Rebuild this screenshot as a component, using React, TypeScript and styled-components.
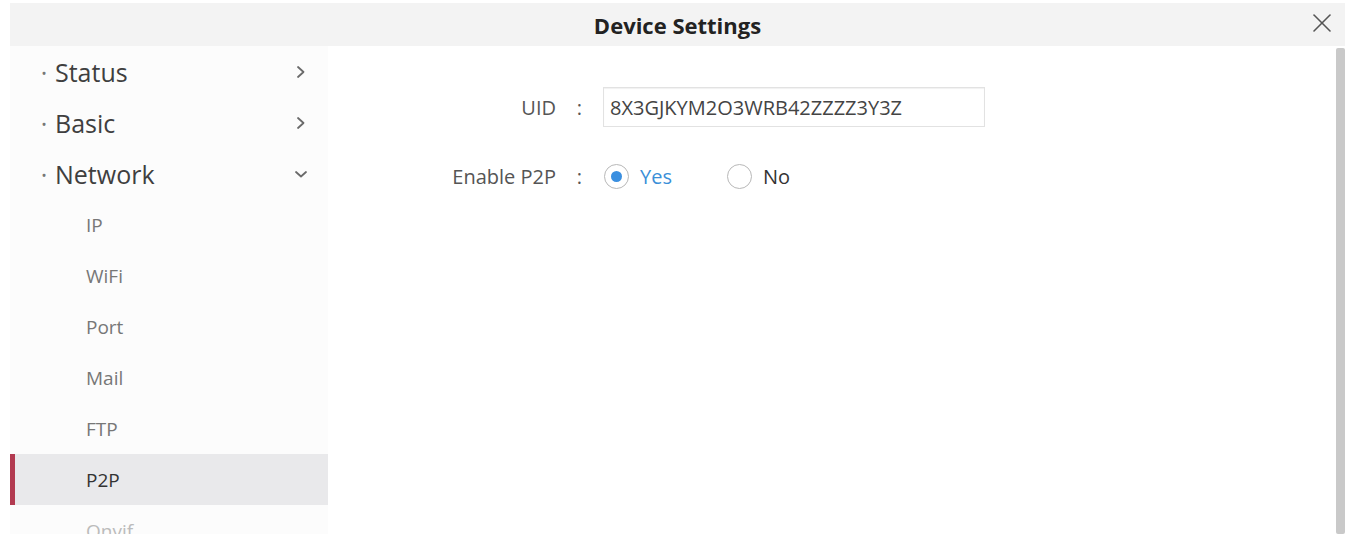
import React from 'react'
import styled, { createGlobalStyle } from 'styled-components'

const GlobalStyle = createGlobalStyle`
  html, body {
    margin: 0;
    padding: 0;
    background: #ffffff;
    overflow: hidden;
  }
  body {
    font-family: "Open Sans", "Noto Sans", "Liberation Sans", sans-serif;
  }
`;

const Dialog = styled.div`
  height: 534px;
  padding: 3px 3px 0 10px;
  box-sizing: border-box;
  display: flex;
  flex-direction: column;
  overflow: hidden;
`;

const Header = styled.div`
  height: 43px;
  flex-shrink: 0;
  background: #f3f3f3;
  display: flex;
  align-items: center;
  justify-content: center;
  position: relative;
`;

const Title = styled.div`
  font-weight: 700;
  font-size: 22px;
  color: #222;
`;

const CloseButton = styled.div`
  position: absolute;
  right: 12px;
  top: 9px;
  width: 22px;
  height: 22px;
  display: flex;
  align-items: center;
  justify-content: center;
`;

const Body = styled.div`
  flex: 1;
  display: flex;
  flex-direction: row;
  min-height: 0;
`;

const Sidebar = styled.div`
  width: 318px;
  flex-shrink: 0;
  background: #fcfcfc;
  display: flex;
  flex-direction: column;
`;

const MenuItem = styled.div`
  height: 51px;
  flex-shrink: 0;
  display: flex;
  align-items: center;
  justify-content: space-between;
  padding: 0 19px 0 27px;
  font-size: 25px;
  color: #3f3f3f;
`;

const Bullet = styled.span`
  display: inline-block;
  width: 14px;
  text-align: center;
  color: #777;
  margin-right: 4px;
`;

const SubItem = styled.div<{ active?: boolean; faded?: boolean }>`
  height: 51px;
  flex-shrink: 0;
  display: flex;
  align-items: center;
  padding-left: 71px;
  font-size: 19px;
  color: ${props => props.active ? '#333' : props.faded ? '#bbb' : '#777'};
  background: ${props => props.active ? '#e9e9eb' : 'transparent'};
  border-left: 5px solid ${props => props.active ? '#b23a50' : 'transparent'};
  box-sizing: border-box;
`;

const Content = styled.div`
  flex: 1;
  display: flex;
  flex-direction: row;
`;

const Form = styled.div`
  flex: 1;
  padding-top: 41px;
  display: flex;
  flex-direction: column;
  gap: 29px;
`;

const Row = styled.div`
  height: 40px;
  display: grid;
  grid-template-columns: 228px 47px auto;
  align-items: center;
`;

const Label = styled.div`
  text-align: right;
  font-size: 20px;
  color: #555;
`;

const Colon = styled.div`
  text-align: center;
  font-size: 20px;
  color: #555;
`;

const TextBox = styled.div`
  width: 382px;
  height: 40px;
  box-sizing: border-box;
  border: 1px solid #e2e2e2;
  box-shadow: inset 0 1px 1px rgba(0, 0, 0, 0.06);
  padding-left: 6px;
  display: flex;
  align-items: center;
  font-size: 20px;
  color: #444;
`;

const RadioGroup = styled.div`
  display: flex;
  align-items: center;
`;

const RadioOption = styled.label<{ checked?: boolean }>`
  display: flex;
  align-items: center;
  font-size: 20px;
  color: ${props => props.checked ? '#3a8fd8' : '#333'};
  margin-right: 54px;
`;

const RadioCircle = styled.span<{ checked?: boolean }>`
  width: 25px;
  height: 25px;
  box-sizing: border-box;
  border-radius: 50%;
  border: 1.5px solid #b8b8b8;
  margin: 0 11px 0 1px;
  display: flex;
  align-items: center;
  justify-content: center;
  &::after {
    content: '';
    display: ${props => props.checked ? 'block' : 'none'};
    width: 11px;
    height: 11px;
    border-radius: 50%;
    background: #3a8fe0;
  }
`;

const Scrollbar = styled.div`
  width: 9px;
  margin-top: 2px;
  background: #c9c9c9;
  border-radius: 2px;
  flex-shrink: 0;
`;

const Chevron = ({ open }: { open?: boolean }) => (
  <svg width="16" height="16" viewBox="0 0 16 16" fill="none" stroke="#6a6a6a" strokeWidth="1.8" strokeLinecap="round" strokeLinejoin="round">
    {open ? <polyline points="3,6 8,10.5 13,6" /> : <polyline points="5,3 10.5,8 5,13" />}
  </svg>
)

const subItems = ['IP', 'WiFi', 'Port', 'Mail', 'FTP', 'P2P', 'Onvif']

export default function App() {
  return (
    <>
      <GlobalStyle />
      <Dialog>
        <Header>
          <Title>Device Settings</Title>
          <CloseButton>
            <svg width="20" height="20" viewBox="0 0 20 20" stroke="#555" strokeWidth="1.6" strokeLinecap="round">
              <line x1="2" y1="2" x2="18" y2="18" />
              <line x1="18" y1="2" x2="2" y2="18" />
            </svg>
          </CloseButton>
        </Header>
        <Body>
          <Sidebar>
            <MenuItem><span><Bullet>·</Bullet>Status</span><Chevron /></MenuItem>
            <MenuItem><span><Bullet>·</Bullet>Basic</span><Chevron /></MenuItem>
            <MenuItem><span><Bullet>·</Bullet>Network</span><Chevron open /></MenuItem>
            {subItems.map(item => (
              <SubItem key={item} active={item === 'P2P'} faded={item === 'Onvif'}>{item}</SubItem>
            ))}
          </Sidebar>
          <Content>
            <Form>
              <Row>
                <Label>UID</Label>
                <Colon>:</Colon>
                <TextBox>8X3GJKYM2O3WRB42ZZZZ3Y3Z</TextBox>
              </Row>
              <Row>
                <Label>Enable P2P</Label>
                <Colon>:</Colon>
                <RadioGroup>
                  <RadioOption checked><RadioCircle checked />Yes</RadioOption>
                  <RadioOption><RadioCircle />No</RadioOption>
                </RadioGroup>
              </Row>
            </Form>
            <Scrollbar />
          </Content>
        </Body>
      </Dialog>
    </>
  )
}
